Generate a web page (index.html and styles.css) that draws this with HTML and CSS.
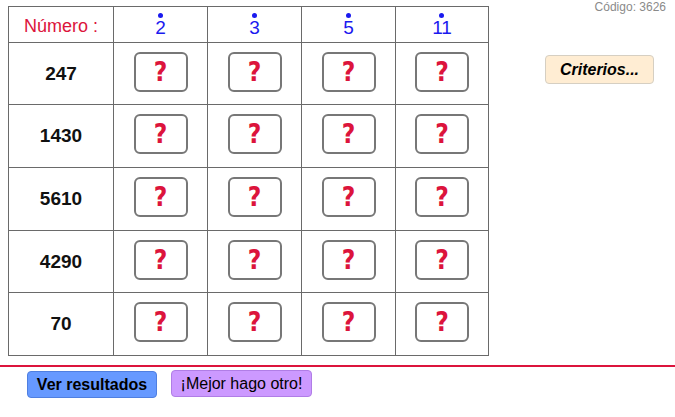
FILE: index.html
```html
<!DOCTYPE html>
<html lang="es">
<head>
<meta charset="utf-8">
<title>Criterios de divisibilidad</title>
<link rel="stylesheet" href="styles.css">
</head>
<body>
<div class="page">
  <div class="top">
    <div class="grid">
      <div class="cell head label">Número :</div>
      <div class="cell head"><span class="div"><i class="dot"></i>2</span></div>
      <div class="cell head"><span class="div"><i class="dot"></i>3</span></div>
      <div class="cell head"><span class="div"><i class="dot"></i>5</span></div>
      <div class="cell head"><span class="div"><i class="dot"></i>11</span></div>

      <div class="cell num">247</div>
      <div class="cell"><span class="q">?</span></div>
      <div class="cell"><span class="q">?</span></div>
      <div class="cell"><span class="q">?</span></div>
      <div class="cell"><span class="q">?</span></div>

      <div class="cell num">1430</div>
      <div class="cell"><span class="q">?</span></div>
      <div class="cell"><span class="q">?</span></div>
      <div class="cell"><span class="q">?</span></div>
      <div class="cell"><span class="q">?</span></div>

      <div class="cell num">5610</div>
      <div class="cell"><span class="q">?</span></div>
      <div class="cell"><span class="q">?</span></div>
      <div class="cell"><span class="q">?</span></div>
      <div class="cell"><span class="q">?</span></div>

      <div class="cell num">4290</div>
      <div class="cell"><span class="q">?</span></div>
      <div class="cell"><span class="q">?</span></div>
      <div class="cell"><span class="q">?</span></div>
      <div class="cell"><span class="q">?</span></div>

      <div class="cell num">70</div>
      <div class="cell"><span class="q">?</span></div>
      <div class="cell"><span class="q">?</span></div>
      <div class="cell"><span class="q">?</span></div>
      <div class="cell"><span class="q">?</span></div>
    </div>
    <div class="side">
      <div class="code">Código: 3626</div>
      <button class="btn criterios">Criterios...</button>
    </div>
  </div>
  <div class="rule"></div>
  <div class="actions">
    <button class="btn ver">Ver resultados</button>
    <button class="btn otro">¡Mejor hago otro!</button>
  </div>
</div>
</body>
</html>
```
FILE: styles.css
```css
* { box-sizing: border-box; }
html, body { margin: 0; padding: 0; background: #fff; }
body { font-family: "Liberation Sans", Arial, sans-serif; width: 675px; height: 417px; overflow: hidden; }

.page { display: flex; flex-direction: column; }

.top { display: flex; align-items: flex-start; }

.grid {
  margin: 6px 0 0 8px;
  display: grid;
  grid-template-columns: 104px 93px 93px 93px 92px;
  grid-template-rows: 35px 61px 62px 62px 61px 62px;
  gap: 1px;
  padding: 1px;
  background: #6a6a6a;
}

.cell {
  background: #fff;
  display: flex;
  align-items: center;
  justify-content: center;
}

.label {
  color: #dc143c;
  font-size: 18px;
  padding-top: 4px;
}

.div {
  display: flex;
  flex-direction: column;
  align-items: center;
  color: #1a1aef;
  font-size: 19px;
  line-height: 18px;
  padding-top: 1px;
}
.dot {
  width: 5px;
  height: 5px;
  border-radius: 50%;
  background: #1a1aef;
  margin-bottom: 1px;
}

.num {
  font-weight: bold;
  font-size: 19px;
  color: #111;
}

.q {
  width: 54px;
  height: 40px;
  border: 2px solid #777;
  border-radius: 6px;
  display: flex;
  align-items: center;
  justify-content: center;
  color: #dc143c;
  font-family: "DejaVu Sans Condensed", "DejaVu Sans", sans-serif;
  font-weight: bold;
  font-size: 26px;
  margin-top: -4px;
}

.side {
  flex: 1;
  display: flex;
  flex-direction: column;
  align-items: flex-start;
}
.code {
  align-self: flex-end;
  margin: 0 9px 0 0;
  font-size: 12px;
  color: #8a8a8a;
}
.btn {
  font-family: "Liberation Sans", Arial, sans-serif;
  font-size: 16px;
  color: #000;
  border-radius: 4px;
  padding: 0;
  cursor: pointer;
}
.criterios {
  margin: 41px 0 0 56px;
  width: 109px;
  height: 29px;
  background: #ffedd3;
  border: 1px solid #d6cfc2;
  font-weight: bold;
  font-style: italic;
}

.rule {
  margin-top: 9px;
  height: 2px;
  background: #dc143c;
}

.actions {
  display: flex;
  align-items: flex-start;
  gap: 14px;
  padding-left: 27px;
  margin-top: 3px;
}
.ver {
  margin-top: 1px;
  width: 130px;
  height: 27px;
  background: #6699ff;
  border: 1px solid #4f7fe0;
  font-weight: bold;
}
.otro {
  width: 141px;
  height: 27px;
  background: #cc99ff;
  border: 1px solid #b07de6;
}
```
